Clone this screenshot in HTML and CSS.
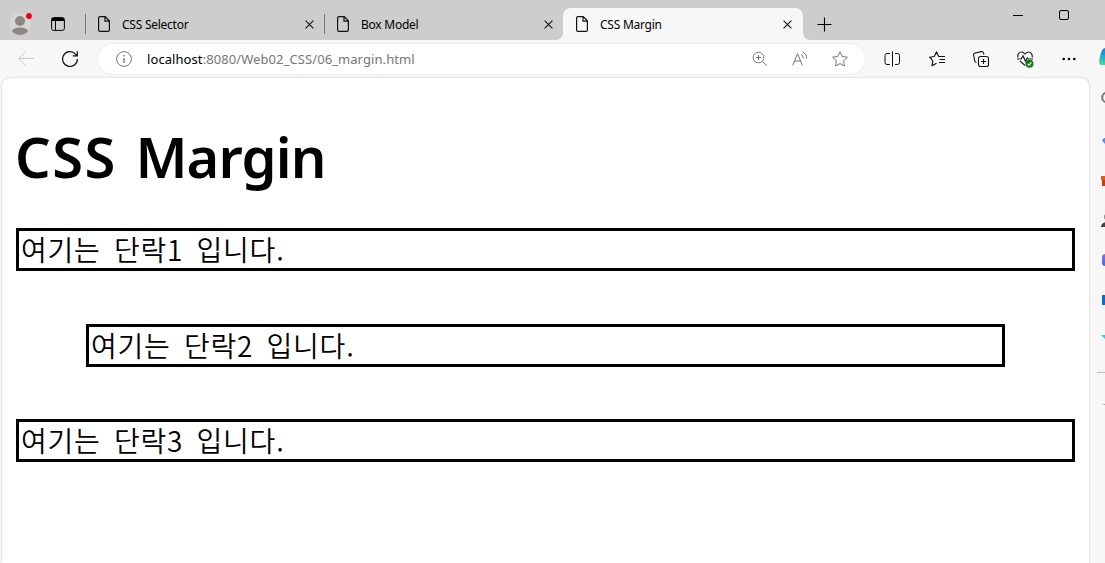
FILE: index.html
```html
<!DOCTYPE html>
<html lang="ko">
<head>
<meta charset="UTF-8">
<title>CSS Margin</title>
<link rel="stylesheet" href="styles.css">
</head>
<body>
<div class="browser">
	<!-- tab strip -->
	<div class="tabs">
		<div class="profile">
			<svg width="24" height="24" viewBox="0 0 24 24"><circle cx="12" cy="12" r="11" fill="#d8d6d2"/><circle cx="12" cy="9" r="5" fill="#8b8784"/><path d="M4 19.500C5 16.500 8 15.500 12 15.500s7 1 8 4A11 11 0 0 1 4 19.500z" fill="#8b8784"/><circle cx="21" cy="4" r="3.500" fill="#e60012" stroke="#d8d8d8"/></svg>
		</div>
		<svg class="workspace" width="14" height="14" viewBox="0 0 14 14" fill="none" stroke="#000"><rect x=".6" y=".6" width="12.800" height="12.800" rx="2"/><path d="M1 2.500h12" stroke-width="3"/><path d="M4.500 3v10"/></svg>
		<div class="tab first">
			<svg class="doc" width="12" height="16" viewBox="0 0 12 16"><path d="M2 .6h5.200l4.200 4.200V14a1.400 1.400 0 0 1-1.400 1.400H2A1.400 1.400 0 0 1 .6 14V2A1.400 1.400 0 0 1 2 .6zM7 .8v4.300h4.300"/></svg>
			<span>CSS Selector</span>
			<svg class="close" width="9" height="9" viewBox="0 0 9 9"><path d="M.6.6l7.800 7.800M8.400.6L.6 8.400"/></svg>
		</div>
		<div class="tab">
			<svg class="doc" width="12" height="16" viewBox="0 0 12 16"><path d="M2 .6h5.200l4.200 4.200V14a1.400 1.400 0 0 1-1.400 1.400H2A1.400 1.400 0 0 1 .6 14V2A1.400 1.400 0 0 1 2 .6zM7 .8v4.300h4.300"/></svg>
			<span>Box Model</span>
			<svg class="close" width="9" height="9" viewBox="0 0 9 9"><path d="M.6.6l7.800 7.800M8.400.6L.6 8.400"/></svg>
		</div>
		<div class="tab active">
			<svg class="doc" width="12" height="16" viewBox="0 0 12 16"><path d="M2 .6h5.200l4.200 4.200V14a1.400 1.400 0 0 1-1.400 1.400H2A1.400 1.400 0 0 1 .6 14V2A1.400 1.400 0 0 1 2 .6zM7 .8v4.300h4.300"/></svg>
			<span>CSS Margin</span>
			<svg class="close" width="9" height="9" viewBox="0 0 9 9"><path d="M.6.6l7.800 7.800M8.400.6L.6 8.400"/></svg>
		</div>
		<svg class="plus" width="15" height="15" viewBox="0 0 15 15"><path d="M7.500 .5v14M.5 7.500h14" stroke="#000" stroke-width="1.100"/></svg>
		<div class="win">
			<svg width="10" height="12" viewBox="0 0 10 12"><path d="M0 6.500h10" stroke="#000"/></svg>
			<svg width="10" height="10" viewBox="0 0 10 10"><rect x=".5" y=".5" width="9" height="9" rx="1.500" fill="none" stroke="#000"/></svg>
		</div>
	</div>
	<!-- toolbar -->
	<div class="toolbar">
		<svg width="16" height="16" viewBox="0 0 16 16" fill="none" stroke="#c9c9c9"><path d="M16 7.500H.8M8 .3L.8 7.500 8 14.700"/></svg>
		<svg class="reload" width="16" height="16" viewBox="0 0 16 16" fill="none" stroke="#111" stroke-width="1.200"><path d="M15.400 8A7.400 7.400 0 1 1 13.500 3.100L15 4.700M15.300.3v4.600h-4.600"/></svg>
		<div class="address">
			<svg width="16" height="16" viewBox="0 0 16 16" fill="none" stroke="#767676"><circle cx="8" cy="8" r="7.400"/><path d="M8 7v5M8 4v1.500" stroke-width="1.400"/></svg>
			<span class="url"><b>localhost</b>:8080/Web02_CSS/06_margin.html</span>
			<svg width="16" height="16" viewBox="0 0 16 16" fill="none" stroke="#767676"><circle cx="6.500" cy="6.500" r="5.300"/><path d="M10.400 10.400l4.400 4.400M6.500 4v5M4 6.500h5"/></svg>
			<svg width="16" height="16" viewBox="0 0 16 16" fill="none" stroke="#767676"><path d="M.8 14.500L5.600 2.500l4.800 12M2.600 10h6M9 3.200c1.400 1 2 2.300 2 4M10.500.8c2.900 1.600 4.200 3.600 4 6.800"/></svg>
			<svg width="16" height="16" viewBox="0 0 16 16" fill="none" stroke="#767676" stroke-linejoin="round"><path d="M8 .8l2.200 4.700 5.200.7-3.800 3.600.9 5.200L8 12.500 3.500 15l.9-5.200L.6 6.200l5.200-.7z"/></svg>
		</div>
		<div class="tools">
			<svg width="16" height="16" viewBox="0 0 16 16" fill="none" stroke="#111"><path d="M6 2.500H3a2 2 0 0 0-2 2v7a2 2 0 0 0 2 2H6M11 2.500h2.500a2 2 0 0 1 2 2v7a2 2 0 0 1-2 2H11M8.500.3v15.400"/></svg>
			<svg width="17" height="16" viewBox="0 0 17 16" fill="none" stroke="#111" stroke-linejoin="round" stroke-width="1.100"><path d="M8.500 12.300L4 14.800l.8-5L1.600 6.200l4.700-.7L8.500.8l2.200 4.700h6.300M11.500 8.500h5.500M11 11.500h6"/></svg>
			<svg width="16" height="16" viewBox="0 0 16 16" fill="none" stroke="#111" stroke-width="1.100"><rect x="5.500" y="5.500" width="10" height="10" rx="2"/><path d="M10.500 8v5M8 10.500h5M3.500 11.500c-1 0-1.500-.5-1.700-1.300L.6 4.200C.4 3 1 2.200 2 2L8.500.6c1-.2 1.700.3 2 1.200l.4 1.700"/></svg>
			<svg width="17" height="17" viewBox="0 0 17 17" fill="none" stroke="#222" stroke-width="1.200"><path d="M.8 6.500C.3 3.500 2 1 4.300 1 6.200 1 7.200 2 8 3c.8-1 1.800-2 3.700-2C14 1 15.700 3.500 15.200 6.500M0 8h4.200L6 4.800l2.500 5.500L10.300 7l1 1H16M3 10l5 4.500"/><circle cx="12.500" cy="12.800" r="4" fill="#107c10" stroke="none"/><path d="M10.700 12.800l1.300 1.300 2.300-2.600" stroke="#fff"/></svg>
			<svg width="14" height="4" viewBox="0 0 14 4"><circle cx="1.700" cy="2" r="1.300"/><circle cx="7" cy="2" r="1.300"/><circle cx="12.300" cy="2" r="1.300"/></svg>
		</div>
		<svg class="copilot" width="20" height="20" viewBox="0 0 20 20"><defs><linearGradient id="cp" x1="0" y1="0" x2="0" y2="1"><stop offset="0" stop-color="#1c83dc"/><stop offset=".45" stop-color="#18a8d8"/><stop offset="1" stop-color="#55d98b"/></linearGradient></defs><path d="M7 1h11v17H2.500C0 18-.2 15 .6 11l1.400-5C3 2.500 4.500 1 7 1z" fill="url(#cp)"/></svg>
	</div>
	<div class="main">
		<div class="page">
			<h1><span class="css">CSS</span> <span class="word">Margin</span></h1>
			<p>여기는 단락1 입니다.</p>
			<p class="margin">여기는 단락2 입니다.</p>
			<p>여기는 단락3 입니다.</p>
		</div>
		<!-- sidebar, runs past the right edge -->
		<div class="side">
			<svg width="16" height="16" viewBox="0 0 16 16"><circle cx="6" cy="6.500" r="4.800" fill="none" stroke="#777" stroke-width="2"/></svg>
			<svg width="16" height="16" viewBox="0 0 16 16"><path d="M1 9.500l2-2.500h11v6H4z" fill="#5b8def"/></svg>
			<svg width="16" height="16" viewBox="0 0 16 16"><path d="M0 5h15v4H0z" fill="#e8590c"/><path d="M1 9h13v6H1z" fill="#c63f10"/></svg>
			<svg width="16" height="16" viewBox="0 0 16 16"><circle cx="6.500" cy="6" r="3.500" fill="#888"/><path d="M0 16c0-3 2-5 6-5v6H1z" fill="#444"/></svg>
			<svg width="16" height="16" viewBox="0 0 16 16"><defs><linearGradient id="ms" x1="0" y1="0" x2="0" y2="1"><stop offset="0" stop-color="#9a68dd"/><stop offset="1" stop-color="#2f7cdf"/></linearGradient></defs><rect x="1" y="3" width="14" height="12" rx="3" fill="url(#ms)"/></svg>
			<svg width="16" height="16" viewBox="0 0 16 16"><path d="M1 4h14v10H1z" fill="#0f6cce"/></svg>
			<svg width="16" height="16" viewBox="0 0 16 16"><path d="M0 4h14L7 11z" fill="#3bc5ef"/></svg>
			<hr>
			<svg class="add" width="16" height="16" viewBox="0 0 16 16"><path d="M0 7.500h12" stroke="#aaa"/></svg>
		</div>
	</div>
</div>
</body>
</html>
```
FILE: styles.css
```css
body {
	margin: 0;
	background: #f7f7f7;
	overflow: hidden;
	font-family: "Noto Sans", sans-serif;
	color: #000;
}
svg {
	display: block;
	flex: none;
}
.browser {
	width: 1105px;
	height: 563px;
	display: flex;
	flex-direction: column;
	overflow: hidden;
}
.tabs {
	height: 40px;
	flex: none;
	display: flex;
	align-items: center;
	background: #cdcdcd;
	box-sizing: border-box;
	padding-top: 8px;
}
.profile {
	margin-left: 8px;
}
.workspace {
	margin-left: 19px;
}
.tab {
	width: 239px;
	height: 32px;
	box-sizing: border-box;
	display: flex;
	align-items: center;
	padding: 0 10px 0 13px;
	font-size: 12px;
	letter-spacing: -.25px;
	background: linear-gradient(#777, #777) 0 6px / 1px 20px no-repeat;
}
.tab.first {
	margin-left: 20px;
}
.tab.active {
	width: 240px;
	padding-right: 11px;
	background: #f7f7f7;
	border-radius: 8px 8px 0 0;
	position: relative;
}
/* flared feet of the active tab */
.tab.active::before,
.tab.active::after {
	content: "";
	position: absolute;
	bottom: 0;
	width: 7px;
	height: 7px;
}
.tab.active::before {
	left: -7px;
	background: radial-gradient(circle at 0 0, #cdcdcd 6.5px, #f7f7f7 7.2px);
}
.tab.active::after {
	right: -7px;
	background: radial-gradient(circle at 100% 0, #cdcdcd 6.5px, #f7f7f7 7.2px);
}
.tab span {
	margin-left: 12px;
	white-space: nowrap;
}
.doc {
	fill: none;
	stroke: #111;
	stroke-width: 1.2;
}
.close {
	margin-left: auto;
	stroke: #111;
	stroke-width: 1.1;
}
.plus {
	margin-left: 14px;
}
.win {
	display: flex;
	align-items: center;
	gap: 36px;
	margin-left: auto;
	margin-right: 36px;
	align-self: flex-start;
	height: 14px;
}
.toolbar {
	height: 38px;
	flex: none;
	display: flex;
	align-items: center;
	padding-left: 18px;
	background: #f7f7f7;
}
.reload {
	margin-left: 28px;
}
.address {
	width: 767px;
	height: 30px;
	flex: none;
	margin-left: 20px;
	box-sizing: border-box;
	padding: 0 17px 0 18px;
	display: flex;
	align-items: center;
	gap: 24px;
	background: #fff;
	border-radius: 15px;
	box-shadow: 0 0 2px rgba(0,0,0,.1);
}
.url {
	flex: 1;
	margin-left: -9px;
	font-size: 13px;
	letter-spacing: .08px;
	color: #767676;
}
.url b {
	font-weight: normal;
	color: #000;
}
.tools {
	display: flex;
	align-items: center;
	gap: 28px;
	margin-left: 19px;
}
.copilot {
	margin-left: 23px;
	margin-top: -5px;
}
.main {
	flex: 1;
	display: flex;
	min-height: 0;
}
.page {
	width: 1087px;
	box-sizing: border-box;
	margin-left: 2px;
	padding: 41px 14px 0;
	background: #fff;
	border-radius: 8px 8px 0 0;
	box-shadow: 0 0 2px rgba(0,0,0,.25);
}
h1 {
	margin: 0 0 34px -1px;
	font-size: 56px;
	line-height: 75px;
	font-weight: 650;
	word-spacing: 4px;
	white-space: nowrap;
}
h1 .css {
	letter-spacing: 1.5px;
}
h1 .word {
	letter-spacing: -.8px;
}
.page p {
	margin: 0;
	height: 43px;
	box-sizing: border-box;
	border: 3px solid #000;
	padding: 0 2px;
	font-family: "Noto Sans CJK KR", sans-serif;
	font-size: 28px;
	line-height: 37px;
	font-weight: 350;
	letter-spacing: .8px;
	word-spacing: 4.6px;
}
.page p.margin {
	margin: 53px 70px 52px;
}
.side {
	width: 4px;
	margin-left: 12px;
	padding-top: 13px;
	display: flex;
	flex-direction: column;
	gap: 24px;
}
.side hr {
	width: 16px;
	height: 1px;
	margin: 1px 0 0 -4px;
	border: 0;
	background: #bbb;
}
.add {
	margin-left: 2px;
}
```
